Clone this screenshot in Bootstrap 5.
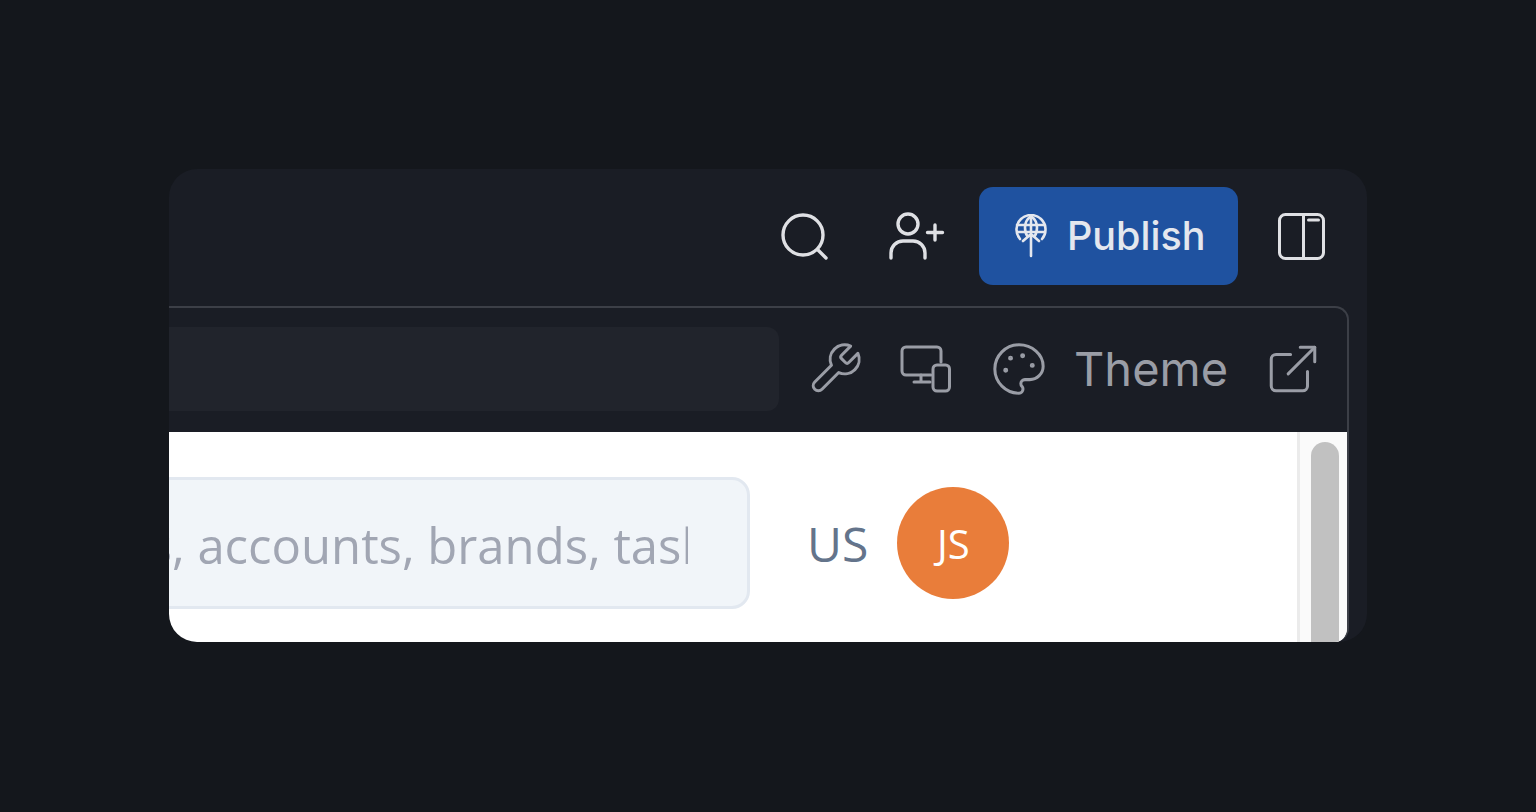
<!DOCTYPE html>
<html lang="en">
<head>
<meta charset="utf-8">
<title>Publish toolbar</title>
<link href="https://cdn.jsdelivr.net/npm/bootstrap@5.3.0/dist/css/bootstrap.min.css" rel="stylesheet">
<style>
body{background:#14171c;font-family:"Inter","Liberation Sans",sans-serif;}
.stage{height:812px;padding-top:169px;}
.appwin{width:1198px;height:473px;background:#1a1d25;border-radius:28px;overflow:hidden;}
.topbar{height:137px;padding:0 38px 3px 0;color:#dfe0e4;}
.ico{display:block;flex:none;fill:none;stroke:currentColor;stroke-linecap:round;stroke-linejoin:round;}
.ico-search{margin-right:58px;}
.ico-user{margin-right:34px;}
.pub-btn{width:259px;height:98px;background:#1f52a0;border:0;border-radius:14px;color:#e4e7ee;font-size:39.500px;font-weight:500;padding:0 0 0 36px;margin-right:35px;gap:20px;}
.pub-btn span{padding-top:2px;}
.pub-btn:hover,.pub-btn:active{background:#1f52a0!important;color:#e4e7ee!important;}
.framebox{height:336px;margin-right:18px;border:2px solid #3c3f47;border-left:0;border-bottom:0;border-radius:0 14px 14px 0;overflow:hidden;}
.toolrow{height:124px;padding-bottom:2px;color:#9a9da6;}
.urlfield{width:610px;height:84px;background:#21242c;border-radius:0 12px 12px 0;margin-right:27px;}
.ico-wrench{margin-right:36px;}
.ico-device{margin-right:39px;}
.ico-palette{margin-left:-1px;}
.theme-lbl{font-size:47px;line-height:1;margin:0 36px 2px 26px;}
.whitearea{height:210px;background:#fff;}
.contentrow{padding-top:45px;}
.searchbox{flex:none;width:772.500px;height:132px;margin-left:-192px;background:#f1f5f9;border:3px solid #e2e8f0;border-radius:18px;padding:3px 59px 0 0;font-family:"Open Sans",sans-serif;font-size:49px;overflow:hidden;box-shadow:none;outline:0;}
.searchbox::placeholder{color:#a1a6b3;opacity:1;}
.region-lbl{font-family:"Open Sans",sans-serif;font-size:48px;color:#64748b;margin:2px 0 0 57.500px;line-height:1;}
.avatar-dot{width:112px;height:112px;background:#e97d3a;color:#fff;font-family:"Open Sans",sans-serif;font-size:40px;padding-top:2px;margin-left:29px;margin-top:10px;margin-bottom:10px;}
.scrolltrack{width:50px;flex:none;background:#fafafa;border-left:3px solid #ebebeb;padding:10px 8px 0 11px;}
.scrollthumb{background:#c1c1c1;border-radius:14px 14px 0 0;height:240px;}
</style>
</head>
<body>
<div class="stage d-flex align-items-start justify-content-center">
  <div class="appwin">
    <div class="topbar d-flex align-items-center justify-content-end">
      <svg class="ico ico-search" width="56" height="56" viewBox="0 0 56 56" stroke-width="3.400"><circle cx="28" cy="27" r="20"/><path d="M43 42l8 8"/></svg>
      <svg class="ico ico-user" width="56" height="56" viewBox="0 0 56 56" stroke-width="3.400"><circle cx="19" cy="16" r="10"/><path d="M2 50v-5a12 12 0 0 1 12-12h10a12 12 0 0 1 12 12v5"/><path d="M46 17v15M38.500 24.500h15"/></svg>
      <button type="button" class="btn pub-btn d-flex align-items-center">
        <svg class="ico" width="32" height="44" viewBox="0 0 32 44" stroke-width="2.600"><path d="M5 25a14.500 14.500 0 1 1 22 0"/><path d="M16 2c-4 3-6 7-6 11.500 0 4 1 7 2.500 9M16 2c4 3 6 7 6 11.500 0 4-1 7-2.500 9M2 11h28M3 18h26M16 2v15"/><path d="M16 42V20M8 27l8-7 8 7"/></svg>
        <span>Publish</span>
      </button>
      <svg class="ico" width="56" height="56" viewBox="0 0 56 56" stroke-width="3"><rect x="6.500" y="6.500" width="44" height="44" rx="6"/><path d="M30.500 6.500v44"/><path d="M35.500 12h10"/></svg>
    </div>
    <div class="framebox d-flex flex-column">
      <div class="toolrow d-flex align-items-center">
        <div class="urlfield"></div>
        <svg class="ico ico-wrench" width="58" height="58" viewBox="0 0 24 24" stroke-width="1.250"><path d="M14.700 6.300a1 1 0 0 0 0 1.400l1.600 1.600a1 1 0 0 0 1.400 0l3.770-3.770a6 6 0 0 1-7.940 7.940l-6.910 6.910a2.120 2.120 0 0 1-3-3l6.910-6.910a6 6 0 0 1 7.940-7.940l-3.760 3.760z"/></svg>
        <svg class="ico ico-device" width="52" height="50" viewBox="0 0 52 50" stroke-width="3"><path d="M41 18V7a4 4 0 0 0-4-4H6a4 4 0 0 0-4 4v20a4 4 0 0 0 4 4h25"/><path d="M21 31v7M14 38h16"/><rect x="33" y="21" width="16.500" height="26" rx="4"/></svg>
        <svg class="ico ico-palette" width="58" height="58" viewBox="0 0 24 24" stroke-width="1.250"><path d="M12 2C6.500 2 2 6.500 2 12s4.500 10 10 10c.926 0 1.648-.746 1.648-1.688 0-.437-.18-.835-.437-1.125-.29-.289-.438-.652-.438-1.125a1.640 1.640 0 0 1 1.668-1.668h1.996c3.051 0 5.555-2.503 5.555-5.554C21.965 6.012 17.461 2 12 2z"/><circle cx="13.500" cy="6.500" r=".4" fill="currentColor"/><circle cx="17.500" cy="10.500" r=".4" fill="currentColor"/><circle cx="8.500" cy="7.500" r=".4" fill="currentColor"/><circle cx="6.500" cy="12.500" r=".4" fill="currentColor"/></svg>
        <span class="theme-lbl">Theme</span>
        <svg class="ico" width="58" height="58" viewBox="0 0 24 24" stroke-width="1.250"><path d="M18 13v6a2 2 0 0 1-2 2H5a2 2 0 0 1-2-2V8a2 2 0 0 1 2-2h6"/><path d="M15 3h6v6"/><path d="M10 14 21 3"/></svg>
      </div>
      <div class="whitearea d-flex flex-grow-1">
        <div class="contentrow d-flex align-items-start flex-grow-1">
          <input class="searchbox form-control" type="text" placeholder="contacts, accounts, brands, tasks">
          <div class="d-flex align-items-center">
            <span class="region-lbl">US</span>
            <div class="avatar-dot rounded-circle d-flex align-items-center justify-content-center">JS</div>
          </div>
        </div>
        <div class="scrolltrack"><div class="scrollthumb"></div></div>
      </div>
    </div>
  </div>
</div>
<script src="https://cdn.jsdelivr.net/npm/bootstrap@5.3.0/dist/js/bootstrap.bundle.min.js"></script>
</body>
</html>
